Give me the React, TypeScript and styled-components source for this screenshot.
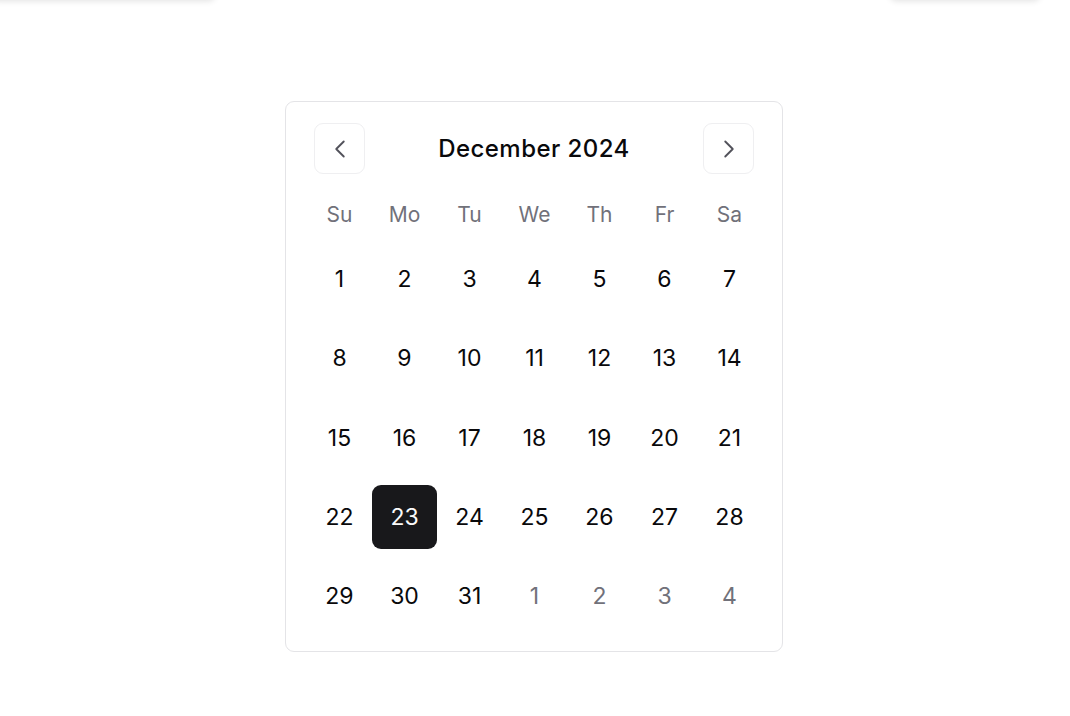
import React from "react";
import styled, { createGlobalStyle } from "styled-components";
import { ChevronLeft, ChevronRight } from "lucide-react";

const GlobalStyle = createGlobalStyle`
  html, body { margin: 0; padding: 0; background: #ffffff; }
  body { font-family: Inter, "Noto Sans", "Liberation Sans", sans-serif; color: #09090b; }
`;

const Page = styled.div`
  position: relative;
  width: 1070px;
  height: 716px;
  overflow: hidden;
  padding: 101px 0 0 285px;
  box-sizing: border-box;
`;

const GhostEdge = styled.div<{ $left: number; $width: number }>`
  position: absolute;
  top: -40px;
  left: ${(p) => p.$left}px;
  width: ${(p) => p.$width}px;
  height: 40px;
  background: #fff;
  border-radius: 6px;
  box-shadow: 0 1px 6px rgba(0, 0, 0, 0.12);
`;

const Card = styled.div`
  width: 498px;
  box-sizing: border-box;
  border: 1px solid #e4e4e7;
  border-radius: 9px;
  padding: 21px 21px 23px 21px;
  background: #fff;
`;

const Header = styled.div`
  display: flex;
  align-items: center;
  justify-content: space-between;
  padding: 0 7px 0 7px;
  margin-bottom: 20px;
`;

const NavButton = styled.button`
  width: 51px;
  height: 51px;
  display: flex;
  align-items: center;
  justify-content: center;
  border: 1px solid #efeff1;
  border-radius: 9px;
  background: #fff;
  color: #52525b;
  padding: 0;
  cursor: pointer;
`;

const Title = styled.div`
  font-size: 24px;
  font-weight: 500;
  letter-spacing: 0.45px;
  color: #09090b;
`;

const Grid = styled.div<{ $rowH: number; $gap: number }>`
  display: grid;
  grid-template-columns: repeat(7, 65px);
  grid-auto-rows: ${(p) => p.$rowH}px;
  row-gap: ${(p) => p.$gap}px;
`;

const WeekRow = styled(Grid)`
  margin-bottom: 13px;
`;

const WeekDay = styled.div`
  display: flex;
  align-items: center;
  justify-content: center;
  font-size: 21px;
  font-weight: 400;
  color: #71717a;
`;

const Day = styled.div<{ $muted?: boolean; $selected?: boolean }>`
  display: flex;
  align-items: center;
  justify-content: center;
  font-size: 23px;
  font-weight: 400;
  border-radius: 9px;
  color: ${(p) => (p.$selected ? "#fafafa" : p.$muted ? "#71717a" : "#09090b")};
  background: ${(p) => (p.$selected ? "#18181b" : "transparent")};
`;

const weekdays = ["Su", "Mo", "Tu", "We", "Th", "Fr", "Sa"];

const days: { n: number; muted?: boolean }[] = [
  ...Array.from({ length: 31 }, (_, i) => ({ n: i + 1 })),
  ...[1, 2, 3, 4].map((n) => ({ n, muted: true })),
];

export default function App() {
  return (
    <>
      <GlobalStyle />
      <Page>
        <GhostEdge $left={-10} $width={225} />
        <GhostEdge $left={890} $width={150} />
        <Card>
          <Header>
            <NavButton aria-label="Previous month">
              <ChevronLeft size={30} strokeWidth={1.5} />
            </NavButton>
            <Title>December 2024</Title>
            <NavButton aria-label="Next month">
              <ChevronRight size={30} strokeWidth={1.5} />
            </NavButton>
          </Header>
          <WeekRow $rowH={40} $gap={0}>
            {weekdays.map((w) => (
              <WeekDay key={w}>{w}</WeekDay>
            ))}
          </WeekRow>
          <Grid $rowH={64} $gap={15.25}>
            {days.map((d, i) => (
              <Day key={i} $muted={d.muted} $selected={!d.muted && d.n === 23}>
                {d.n}
              </Day>
            ))}
          </Grid>
        </Card>
      </Page>
    </>
  );
}
